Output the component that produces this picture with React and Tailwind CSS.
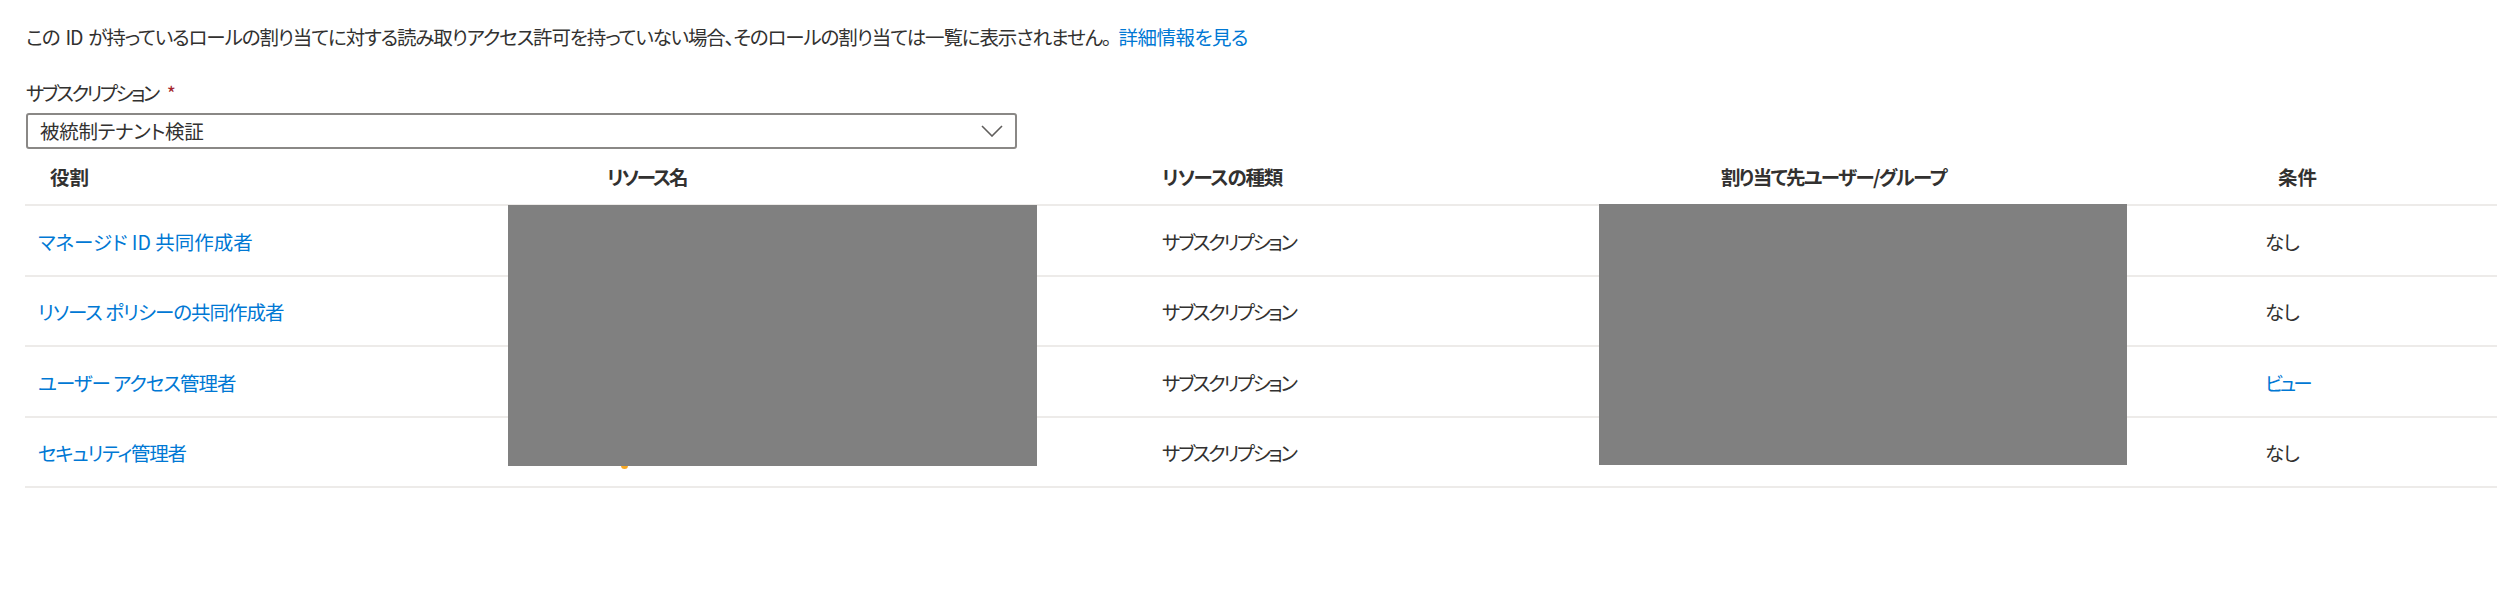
import React from "react";

const rows = [
  { role: "マネージド ID 共同作成者", roleTrack: "tracking-[0px]", type: "サブスクリプション", cond: "なし", condLink: false },
  { role: "リソース ポリシーの共同作成者", roleTrack: "tracking-[-1px]", type: "サブスクリプション", cond: "なし", condLink: false },
  { role: "ユーザー アクセス管理者", roleTrack: "tracking-[-1px]", type: "サブスクリプション", cond: "ビュー", condLink: true },
  { role: "セキュリティ管理者", roleTrack: "tracking-[-1.3px]", type: "サブスクリプション", cond: "なし", condLink: false, icon: true },
];

const font = "[font-family:'Noto_Sans_CJK_JP','Noto_Sans',sans-serif] [font-feature-settings:'palt']";

export default function App() {
  return (
    <div className={`w-[2497px] h-[608px] bg-white text-[#323130] text-[19.5px] ${font}`}>
      <div className="pl-[26px] pt-[23px]">
        <p className="leading-[28px] whitespace-nowrap tracking-[-1.12px]">
          この<span className="ml-[6px]">ID</span>
          <span className="ml-[6px]">が持っているロールの割り当てに対する読み取りアクセス許可を持っていない場合、そのロールの割り当ては一覧に表示されません。</span>
          <span className="ml-[8px] text-[#0078d4] tracking-[-0.5px]">詳細情報を見る</span>
        </p>
        <div className="mt-[29px] leading-[26px] whitespace-nowrap">
          <span className="tracking-[-2.5px]">サブスクリプション</span>
          <span className="ml-[9px] text-[#a4262c]">*</span>
        </div>
        <div className="mt-[7px] w-[991px] h-[36px] border-2 border-[#8a8886] rounded-[3px] flex items-center justify-between pl-[12px] pr-[12px]">
          <span className="leading-[26px] tracking-[-0.3px]">被統制テナント検証</span>
          <svg width="22" height="12" viewBox="0 0 22 12" fill="none">
            <path d="M1 1 L11 11 L21 1" stroke="#605e5c" strokeWidth="1.6" />
          </svg>
        </div>
      </div>
      <div className="relative ml-[25px] mt-[1px]">
        <div className="grid grid-cols-[565px_560px_440px_660px_1fr] h-[56px] items-center border-b-2 border-[#edebe9] font-bold leading-[26px]">
          <div className="pl-[25px]">役割</div>
          <div className="pl-[17px] tracking-[-2.2px]">リソース名</div>
          <div className="pl-[12px] tracking-[-1.3px]">リソースの種類</div>
          <div className="pl-[131px] tracking-[-1.6px]">割り当て先ユーザー/グループ</div>
          <div className="pl-[28px]">条件</div>
        </div>
        {rows.map((r, i) => (
          <div
            key={i}
            className="grid grid-cols-[565px_560px_440px_660px_1fr] h-[70.5px] border-b-2 border-[#edebe9] leading-[26px]"
          >
            <div className={`pl-[13px] flex items-center pt-[3px] text-[#0078d4] ${r.roleTrack}`}>{r.role}</div>
            <div className="flex items-end pl-[31px] pb-[17px]">
              {r.icon && <div className="w-[7px] h-[7px] rounded-full bg-[#f7a823]" />}
            </div>
            <div className="pl-[12px] flex items-center pt-[3px] tracking-[-2.3px]">{r.type}</div>
            <div />
            <div className={`pl-[15px] flex items-center pt-[3px] ${r.condLink ? "text-[#0078d4] tracking-[-3px]" : "tracking-[-1px]"}`}>{r.cond}</div>
          </div>
        ))}
        <div className="absolute left-[483px] top-[55px] w-[529px] h-[261px] bg-[#808080]" />
        <div className="absolute left-[1574px] top-[54px] w-[528px] h-[261px] bg-[#808080]" />
      </div>
    </div>
  );
}
